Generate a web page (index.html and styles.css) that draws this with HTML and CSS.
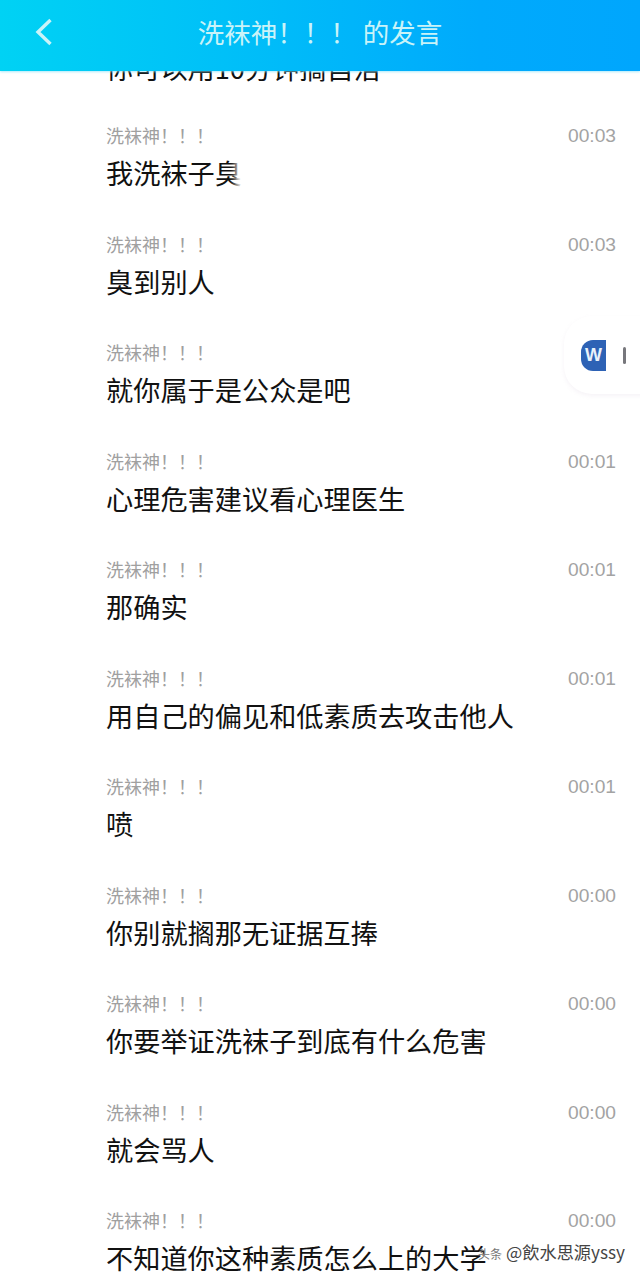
FILE: index.html
```html
<!DOCTYPE html>
<html lang="zh-CN">
<head>
    <meta charset="UTF-8">
    <meta name="viewport" content="width=device-width, initial-scale=1.0">
    <title>洗袜神！！！的发言</title>
    <link rel="stylesheet" href="styles.css">
</head>
<body>

<div class="page">
    <header class="top-bar">
        <svg class="back-icon" width="18" height="28" viewBox="0 0 18 28">
            <path d="M15.5 2 L3 14 L15.5 26" fill="none" stroke="#c9f3f8" stroke-width="3.4"/>
        </svg>
        <h1 class="top-title">洗袜神！！！ 的发言</h1>
    </header>

    <div class="msg-list">
        <div class="msg msg-cut">
            <div class="msg-text">你可以用10分钟搞自洁</div>
        </div>
        <div class="msg">
            <div class="msg-head"><span class="msg-name">洗袜神！！！</span><span class="msg-time">00:03</span></div>
            <div class="msg-text">我洗袜子臭</div>
        </div>
        <div class="msg">
            <div class="msg-head"><span class="msg-name">洗袜神！！！</span><span class="msg-time">00:03</span></div>
            <div class="msg-text">臭到别人</div>
        </div>
        <div class="msg">
            <div class="msg-head"><span class="msg-name">洗袜神！！！</span><span class="msg-time"></span></div>
            <div class="msg-text">就你属于是公众是吧</div>
        </div>
        <div class="msg">
            <div class="msg-head"><span class="msg-name">洗袜神！！！</span><span class="msg-time">00:01</span></div>
            <div class="msg-text">心理危害建议看心理医生</div>
        </div>
        <div class="msg">
            <div class="msg-head"><span class="msg-name">洗袜神！！！</span><span class="msg-time">00:01</span></div>
            <div class="msg-text">那确实</div>
        </div>
        <div class="msg">
            <div class="msg-head"><span class="msg-name">洗袜神！！！</span><span class="msg-time">00:01</span></div>
            <div class="msg-text">用自己的偏见和低素质去攻击他人</div>
        </div>
        <div class="msg">
            <div class="msg-head"><span class="msg-name">洗袜神！！！</span><span class="msg-time">00:01</span></div>
            <div class="msg-text">喷</div>
        </div>
        <div class="msg">
            <div class="msg-head"><span class="msg-name">洗袜神！！！</span><span class="msg-time">00:00</span></div>
            <div class="msg-text">你别就搁那无证据互捧</div>
        </div>
        <div class="msg">
            <div class="msg-head"><span class="msg-name">洗袜神！！！</span><span class="msg-time">00:00</span></div>
            <div class="msg-text">你要举证洗袜子到底有什么危害</div>
        </div>
        <div class="msg">
            <div class="msg-head"><span class="msg-name">洗袜神！！！</span><span class="msg-time">00:00</span></div>
            <div class="msg-text">就会骂人</div>
        </div>
        <div class="msg">
            <div class="msg-head"><span class="msg-name">洗袜神！！！</span><span class="msg-time">00:00</span></div>
            <div class="msg-text">不知道你这种素质怎么上的大学</div>
        </div>
    </div>

    <!-- smudge over the first message -->
    <div class="smudge"></div>

    <!-- floating word doc button -->
    <div class="float-doc">
        <div class="doc-icon">W</div>
        <div class="doc-edge"></div>
    </div>

    <div class="watermark"><span class="watermark-faded">头条</span>@飲水思源yssy</div>
</div>

</body>
</html>
```

FILE: styles.css
```css
* {
    box-sizing: border-box;
}

html, body {
    margin: 0;
    padding: 0;
    background-color: #fff;
}

body {
    font-family: "Noto Sans CJK SC", "Liberation Sans", sans-serif;
}

.page {
    position: relative;
    width: 640px;
    height: 1276px;
    overflow: hidden;
}

/* Top bar */
.top-bar {
    position: relative;
    z-index: 2;
    display: flex;
    align-items: center;
    justify-content: center;
    height: 71px;
    padding-bottom: 7px;
    background: linear-gradient(90deg, #00d2f4 0%, #00c0f8 35%, #00aafc 75%, #00a6fd 100%);
    box-shadow: 0 1px 2px rgba(140, 225, 250, 0.7);
}

.back-icon {
    position: absolute;
    left: 35px;
    top: 18px;
}

.top-title {
    margin: 0;
    font-size: 26.5px;
    font-weight: 400;
    line-height: 36px;
    color: #c9f3f8;
    white-space: pre;
}

/* Message list */
.msg-list {
    margin-top: -69.5px;
    padding-left: 106px;
    padding-right: 24px;
}

.msg {
    height: 108.5px;
    padding-top: 13px;
}

.msg-cut {
    height: 108.5px;
    padding-top: 46px;
}

.msg-head {
    display: flex;
    justify-content: space-between;
    align-items: center;
    height: 24px;
}

.msg-name {
    font-size: 18px;
    color: #a0a0a0;
}

.msg-time {
    margin-top: 2px;
    font-family: "Liberation Sans", sans-serif;
    font-size: 19.2px;
    color: #a3a3a3;
}

.msg-text {
    margin-top: 6px;
    font-size: 27.2px;
    line-height: 38px;
    color: #111;
    white-space: nowrap;
}

.msg-cut .msg-text {
    margin-top: 0;
}

.smudge {
    position: absolute;
    left: 236px;
    top: 154px;
    width: 24px;
    height: 36px;
    background: #fff;
    filter: blur(3px);
}

/* Floating doc button */
.float-doc {
    position: absolute;
    left: 564px;
    top: 316px;
    width: 90px;
    height: 78px;
    display: flex;
    align-items: center;
    padding-left: 17px;
    background-color: #fff;
    border-radius: 28px 0 0 28px;
    box-shadow: 0 2px 4px rgba(190, 170, 200, 0.14);
}

.doc-icon {
    width: 25px;
    height: 31px;
    border-radius: 12px 0 0 12px;
    background-color: #2d62b5;
    color: #e8f2fb;
    font-family: "Liberation Sans", sans-serif;
    font-size: 18px;
    font-weight: 700;
    line-height: 31px;
    text-align: center;
}

.doc-edge {
    width: 3px;
    height: 17px;
    margin-left: 17px;
    border-radius: 2px;
    background-color: #77777c;
}

.watermark {
    position: absolute;
    left: 478px;
    top: 1240px;
    font-size: 17.2px;
    line-height: 24px;
    color: #444;
    white-space: nowrap;
    text-shadow: 0 0 1px #fff;
}

.watermark-faded {
    margin-right: 4px;
    font-size: 12px;
    color: #777;
}
```
